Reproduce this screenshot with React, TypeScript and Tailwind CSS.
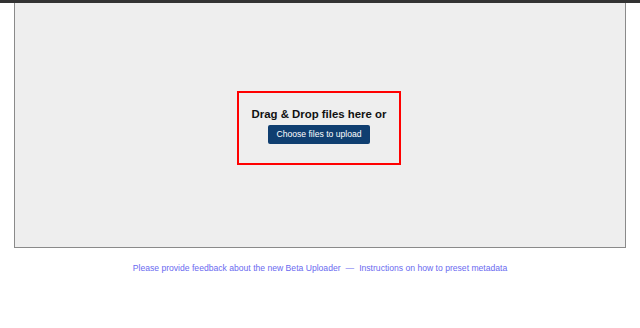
import React from 'react'

export default function App() {
    return (
        <div className="w-[640px] h-[328px] bg-white font-['Liberation_Sans',Arial,sans-serif]">
            <div className="h-[3px] bg-[#333]" />
            <div className="mx-[14px] h-[245px] border border-t-0 border-[#8a8a8a] bg-[#eeeeee] flex items-center justify-center">
                <div className="w-[164px] h-[74px] mt-[5px] -ml-[2px] border-2 border-[#ff0000] flex flex-col items-center justify-center">
                    <p className="text-[11.4px] font-bold text-[#111] leading-none mb-[5px] -mt-[2px]">Drag &amp; Drop files here or</p>
                    <button className="h-[19px] px-[8px] bg-[#0f3e70] rounded-[2px] text-white text-[8.6px] leading-none">
                        Choose files to upload
                    </button>
                </div>
            </div>
            <div className="mt-[14px] text-center text-[8.6px] text-[#6a6af0]">
                <a href="#">Please provide feedback about the new Beta Uploader</a>
                <span className="mx-[5px]">—</span>
                <a href="#">Instructions on how to preset metadata</a>
            </div>
        </div>
    )
}
